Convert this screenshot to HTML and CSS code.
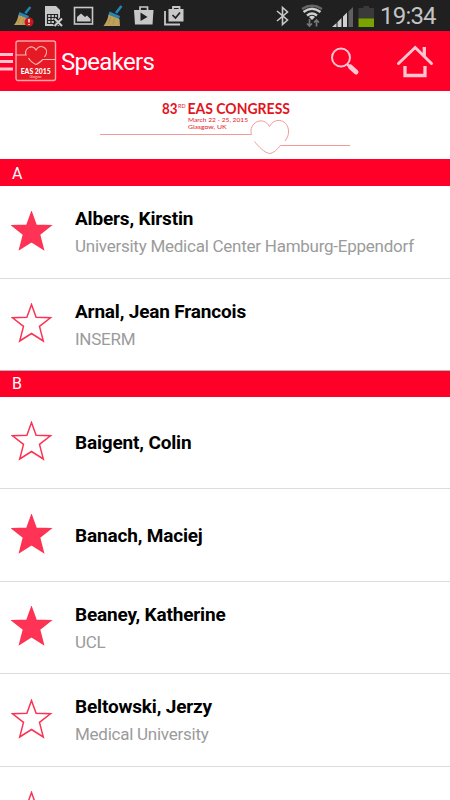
FILE: index.html
```
<!DOCTYPE html>
<html lang="en">
<head>
    <meta charset="UTF-8">
    <meta name="viewport" content="width=device-width, initial-scale=1.0">
    <title>Speakers</title>
    <link rel="stylesheet" href="styles.css">
</head>
<body>
    <!-- Shared shapes -->
    <svg class="defs" width="0" height="0">
        <symbol id="star" viewBox="0 0 42 42">
            <path d="M20.5 1.5 L25.1 14.3 L39.5 14.8 L28.5 23.4 L32.3 38 L20.5 30.5 L8.7 38 L12.5 23.4 L1.5 14.8 L15.9 14.3 Z"/>
        </symbol>
        <symbol id="broom" viewBox="0 0 22 22">
            <path d="M18.5 1 L13 8" stroke="#2387b5" stroke-width="2.6"/>
            <path d="M6.5 6.5 L17 11 L16 14 L5.5 9.5 Z" fill="#2387b5"/>
            <path d="M5.5 9.5 L16.5 14 L17 21 H0.5 Q5 15 5.5 9.5 Z" fill="#bfa15b"/>
            <path d="M8 12 L5 19 M11.5 13 L10 19.5" stroke="#a38948" stroke-width="0.7"/>
        </symbol>
    </svg>

    <div class="status-bar">
        <svg width="200" height="31" viewBox="0 0 200 31" fill="none">
            <use href="#broom" x="13.5" y="6" width="20" height="20"/>
            <circle cx="29" cy="22" r="4.5" fill="#c9181d"/>
            <path d="M29 19 V22.5 M29 24 V25" stroke="#eee" stroke-width="1.5"/>
            <path d="M45 6 H56 L60 10 V26 H45 Z" fill="#c8c8c8"/>
            <path d="M47.5 14.5 H57.5 V23.5 H47.5 Z M47.5 17.5 H57 M47.5 20.5 H57 M51 14.5 V23.5 M54.5 14.5 V23.5" stroke="#222" stroke-width="1.2"/>
            <path d="M54.5 18 L62 26 M62 18 L54.5 26" stroke="#222" stroke-width="4"/>
            <path d="M54.5 18.5 L62 26 M62 18.5 L54.5 26" stroke="#d0d0d0" stroke-width="2"/>
            <rect x="74.5" y="7.5" width="18" height="16.5" stroke="#c8c8c8" stroke-width="1.6"/>
            <path d="M77 21.5 V17 L81 13.5 L85 17 L87 15.5 L90.5 19 V21.5 Z" fill="#c8c8c8"/>
            <use href="#broom" x="103" y="5" width="22" height="22"/>
            <path d="M134 10 H153.5 L152.5 24.5 H135 Z" fill="#c8c8c8"/>
            <path d="M140 10 V7 H147.5 V10" stroke="#c8c8c8" stroke-width="1.7"/>
            <path d="M140.5 12.5 L147.5 17 L140.5 21 Z" fill="#202020"/>
            <path d="M168.5 9 H183.5 V21.5 H168.5 Z" fill="#c8c8c8"/>
            <path d="M173 9.5 V7 H179.5 V9.5 M165 11 V24.5 H180" stroke="#c8c8c8" stroke-width="1.8"/>
            <path d="M172.5 15 L175.5 18 L180 12.5" stroke="#202020" stroke-width="1.7"/>
        </svg>
        <div class="status-right">
            <svg width="120" height="31" viewBox="260 0 120 31" fill="none">
                <path d="M277 11 L287.5 20 L282.5 24.5 V7.5 L287.5 12 L277 21" stroke="#c8c8c8" stroke-width="1.6"/>
                <path d="M302 9 Q312 2.5 322 9" stroke="#666" stroke-width="2.4"/>
                <path d="M303.5 12 Q312 5.5 320.5 12 M307 15.5 Q312 11.5 317 15.5" stroke="#d0d0d0" stroke-width="2.4"/>
                <path d="M309 17 Q312 14.5 315 17 L312 20 Z" fill="#d0d0d0"/>
                <path d="M309.5 19 V26 M307 23.5 L309.5 26 L312 23.5 M316.5 26.5 V20 M314 22.5 L316.5 20 L319 22.5" stroke="#777" stroke-width="1.7"/>
                <path d="M332 27 L336.5 23 V27 Z M337.5 22 L341.5 18 V27 H337.5 Z M343 16.5 L347 12.5 V27 H343 Z" fill="#d0d0d0"/>
                <path d="M348.5 11.5 L353 7 V27 H348.5 Z" fill="#606060"/>
                <path d="M358.5 8 H363.5 V6 H369 V8 H374 V19 H358.5 Z" fill="#3a3a3a"/>
                <rect x="358.5" y="18.5" width="15.5" height="8.5" fill="#7ba300"/>
            </svg>
            <span class="clock">19:34</span>
        </div>
    </div>

    <header class="app-bar">
        <svg class="menu-icon" width="13" height="24" viewBox="0 0 13 24">
            <path d="M0 5.5 H13 M0 12.5 H13 M0 20 H13" stroke="#ffc5cd" stroke-width="3"/>
        </svg>
        <svg class="logo" width="42" height="42" viewBox="0 0 42 42" fill="none">
            <rect x="1" y="1" width="39.5" height="39.5" rx="2" fill="#e61a24" stroke="#ffa5a8" stroke-width="1.4"/>
            <path d="M1 15 H11 C9 9 17 3 21 10 C25 3 34 8 31 14.5 L29.5 17 M13.5 18 C15 21 19 24 21 24.5 C23 24 25.5 21.5 28 19.5 H40" stroke="#ffb5b5" stroke-width="1.1"/>
            <text class="logo-title" x="20.7" y="34" textLength="30" lengthAdjust="spacingAndGlyphs">EAS 2015</text>
            <text class="logo-city" x="20.5" y="38.3" textLength="12">Glasgow</text>
        </svg>
        <h1>Speakers</h1>
        <svg class="actions" width="120" height="60" viewBox="330 31 120 60" fill="none" stroke="#ffc5d0">
            <circle cx="341" cy="57.5" r="9" stroke-width="2"/>
            <path d="M347.5 64.5 L350.5 67.5" stroke-width="2.5"/>
            <path d="M350.5 67 L356 72" stroke-width="5" stroke-linecap="round"/>
            <path d="M398.5 63.5 L415.2 47.5 L431.5 63.5" stroke-width="3" stroke-linecap="round"/>
            <path d="M424.3 47 V57 M405 66 V75.5 H425 V66" stroke-width="3.3"/>
        </svg>
    </header>

    <div class="banner">
        <svg width="270" height="68" viewBox="90 91 270 68" fill="none">
            <text class="congress" x="162" y="114" textLength="15.5" lengthAdjust="spacingAndGlyphs">83</text>
            <text class="ordinal" x="178" y="107.5" textLength="7.5" lengthAdjust="spacingAndGlyphs">RD</text>
            <text class="congress" x="187.5" y="114" textLength="102.5" lengthAdjust="spacingAndGlyphs">EAS CONGRESS</text>
            <text class="venue" x="188" y="122" textLength="60" lengthAdjust="spacingAndGlyphs">March 22 - 25, 2015</text>
            <text class="venue" x="188" y="129.2" textLength="38.5" lengthAdjust="spacingAndGlyphs">Glasgow, UK</text>
            <path d="M100 134.5 H251.5 C248 123 263 115 269.5 126.5 C275 116 289 120 288.5 132 C288.5 136 287 138 285 141 M254.5 141.5 C259 147 264 152.5 269.5 153.5 C274 153 277 149.5 280.5 145.5 H350" stroke="#f29a9a" stroke-width="1"/>
        </svg>
    </div>

    <main>
        <h2 class="section section-a">A</h2>
        <div class="row">
            <svg class="star star-on"><use href="#star"/></svg>
            <div class="info">
                <p class="name">Albers, Kirstin</p>
                <p class="place">University Medical Center Hamburg-Eppendorf</p>
            </div>
        </div>
        <div class="row row-last">
            <svg class="star"><use href="#star"/></svg>
            <div class="info">
                <p class="name">Arnal, Jean Francois</p>
                <p class="place">INSERM</p>
            </div>
        </div>

        <h2 class="section">B</h2>
        <div class="row">
            <svg class="star"><use href="#star"/></svg>
            <div class="info">
                <p class="name">Baigent, Colin</p>
            </div>
        </div>
        <div class="row">
            <svg class="star star-on"><use href="#star"/></svg>
            <div class="info">
                <p class="name">Banach, Maciej</p>
            </div>
        </div>
        <div class="row">
            <svg class="star star-on"><use href="#star"/></svg>
            <div class="info">
                <p class="name">Beaney, Katherine</p>
                <p class="place">UCL</p>
            </div>
        </div>
        <div class="row">
            <svg class="star"><use href="#star"/></svg>
            <div class="info">
                <p class="name">Beltowski, Jerzy</p>
                <p class="place">Medical University</p>
            </div>
        </div>
        <div class="row">
            <svg class="star"><use href="#star"/></svg>
        </div>
    </main>
</body>
</html>
```

FILE: styles.css
```
* {
    box-sizing: border-box;
}

html, body {
    height: 100%;
}

body {
    margin: 0;
    display: flex;
    flex-direction: column;
    overflow: hidden;
    background-color: white;
    font-family: Roboto, sans-serif;
}

h1, h2, p {
    margin: 0;
}

svg {
    display: block;
    flex-shrink: 0;
}

.defs {
    display: none;
}

/* Status bar */
.status-bar {
    display: flex;
    flex-shrink: 0;
    justify-content: space-between;
    height: 31px;
    background-color: #202020;
}

.status-right {
    display: flex;
    width: 190px;
}

.clock {
    color: #c4c4c4;
    font-size: 24px;
    line-height: 32px;
    letter-spacing: -0.8px;
}

/* App bar */
.app-bar {
    display: flex;
    flex-shrink: 0;
    align-items: center;
    height: 60px;
    background-color: #ff0028;
    color: white;
}

.logo {
    margin-left: 2px;
}

.logo-title {
    fill: white;
    font-family: Lato, sans-serif;
    font-size: 7.5px;
    font-weight: 900;
    text-anchor: middle;
}

.logo-city {
    fill: #ffc5c5;
    font-family: Lato, sans-serif;
    font-size: 3.5px;
    text-anchor: middle;
}

.app-bar h1 {
    margin: 2px 0 0 4px;
    font-size: 24px;
    font-weight: 400;
    letter-spacing: -0.7px;
}

.actions {
    margin-left: auto;
}

/* Congress banner */
.banner {
    display: flex;
    flex-shrink: 0;
    justify-content: center;
    height: 68px;
}

.congress {
    fill: #e3141d;
    font-family: Lato, sans-serif;
    font-size: 14.5px;
    font-weight: 700;
}

.ordinal {
    fill: #e3141d;
    font-family: Lato, sans-serif;
    font-size: 5px;
}

.venue {
    fill: #e3141d;
    font-family: Lato, sans-serif;
    font-size: 6.5px;
}

/* Speaker list */
main {
    flex: 1;
    min-height: 0;
    overflow: hidden;
}

.section {
    height: 25.5px;
    padding-left: 12px;
    background-color: #ff0028;
    color: white;
    font-size: 16px;
    font-weight: 400;
    line-height: 25px;
}

.section-a {
    height: 27px;
    line-height: 29px;
}

.row {
    display: flex;
    align-items: center;
    height: 92.5px;
    padding-left: 11px;
    border-bottom: 1px solid #dcdcdc;
}

.row-last {
    border-bottom-color: #b5b5b5;
}

.star {
    width: 42px;
    height: 42px;
    margin-right: 22px;
    fill: none;
    stroke: #fb3453;
    stroke-width: 1.5;
}

.star-on {
    fill: #ff3355;
}

.info {
    padding-top: 2px;
}

.name {
    color: black;
    font-size: 19px;
    font-weight: 700;
    line-height: 28px;
    letter-spacing: -0.17px;
}

.place {
    color: #9b9b9b;
    font-size: 17px;
    line-height: 27px;
    letter-spacing: -0.25px;
}
```
